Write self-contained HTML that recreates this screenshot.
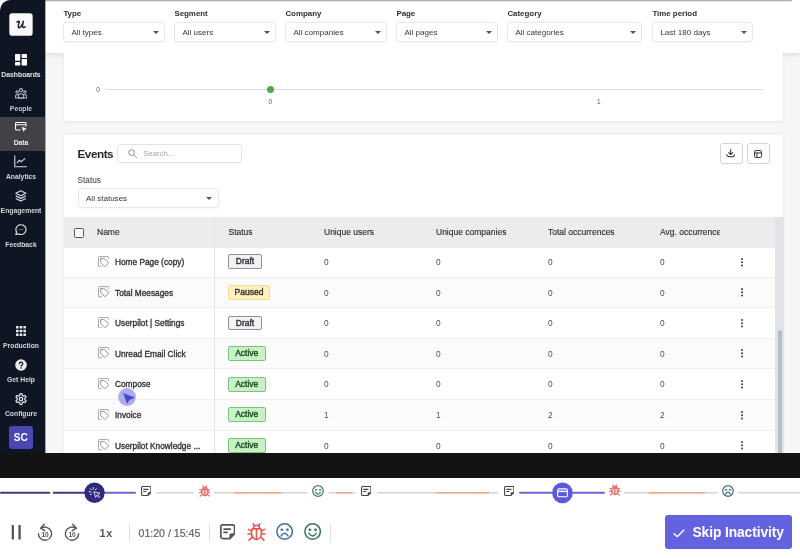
<!DOCTYPE html>
<html><head><meta charset="utf-8">
<style>
*{box-sizing:border-box;margin:0;padding:0}
html,body{width:800px;height:558px;overflow:hidden;background:#fff;font-family:"Liberation Sans",sans-serif;color:#2b2f36}
.abs{position:absolute}
#app{position:absolute;left:0;top:0;width:800px;height:453px;background:#f6f6f7;overflow:hidden}
#side{position:absolute;left:0;top:0;width:45px;height:453px;background:#0f1522;border-top-left-radius:10.500px;box-shadow:1px 0 0 rgba(15,21,34,.35)}
#logo{position:absolute;left:8px;top:12px;display:block}
.nav{position:absolute;left:0;width:45px;text-align:center;color:#e9eaee;font-size:7px;font-weight:bold;letter-spacing:-0.1px}
.nav svg{display:block;margin:0 auto}
#fbar{position:absolute;left:45px;top:0;width:755px;height:53px;border-top:1px solid #fff;background:#fff;box-shadow:0 2px 5px rgba(0,0,0,.10)}
.flabel{position:absolute;top:8.200px;font-size:7.900px;font-weight:bold;color:#2a2e35}
.sel{position:absolute;top:21px;height:20px;border:1px solid #e9e9ec;border-radius:3px;background:#fff;font-size:8.050px;color:#34373d;line-height:19.300px;padding-left:7.500px;box-shadow:0 1px 2px rgba(0,0,0,.04)}
.sel i{position:absolute;right:5.200px;top:8.300px;width:0;height:0;border-left:3px solid transparent;border-right:3px solid transparent;border-top:3.5px solid #555}
#chart{position:absolute;left:63.500px;top:53px;width:719.700px;height:68px;background:#fff;border-radius:0 0 3px 3px;box-shadow:0 1px 3px rgba(0,0,0,.08)}
#events{position:absolute;left:63.500px;top:134px;width:719.700px;height:330px;background:#fff;border-radius:3px 3px 0 0;box-shadow:inset 0 1px 0 #f8f8f9,0 0 3px rgba(0,0,0,.08)}
#black{position:absolute;left:0;top:453px;width:800px;height:25px;background:#131313}
#player{position:absolute;left:0;top:478px;width:800px;height:80px;background:#fff}

.navbg{position:absolute;left:0;width:45px;background:#404247}
.ni{position:absolute;display:block}
.nl{position:absolute;left:-11.500px;width:65px;text-align:center;color:#d3d6dc;font-size:6.800px;font-weight:bold;line-height:9px;white-space:nowrap}
#avatar{position:absolute;left:9px;top:426px;width:23.500px;height:23px;border-radius:3px;background:#4a47b5;color:#fff;font-size:10.200px;font-weight:bold;text-align:center;line-height:23.500px}

.ax{position:absolute;font-size:6.500px;color:#555;text-align:center;line-height:8px}

#etitle{position:absolute;left:14px;top:12.800px;font-size:11.700px;font-weight:bold;letter-spacing:-.45px;color:#25282e;line-height:14px}
#search{position:absolute;left:53.700px;top:9.700px;width:124.500px;height:19.500px;border:1px solid #e3e4e7;border-radius:3px;box-shadow:0 1px 2px rgba(0,0,0,.04)}
#search span{position:absolute;left:25px;top:0;font-size:7.800px;color:#a3a5aa;line-height:17.500px}
.btn{position:absolute;top:9.100px;width:23px;height:20.800px;border:1px solid #d3d3d5;border-radius:3px;background:#fff}
#stlabel{position:absolute;left:14px;top:40.800px;font-size:8.300px;color:#33373d;line-height:10px}
#thead{position:absolute;left:0;top:83px;width:711.500px;height:30.900px;z-index:2;background:#ececee}
#thead span{position:absolute;top:0;line-height:31.600px;font-size:8.500px;color:#26292e;-webkit-text-stroke:.12px #26292e;white-space:nowrap}
.cb{position:absolute;left:10.900px;top:11px;width:10px;height:10px;border:1.200px solid #55585e;border-radius:1.500px;background:#f6f6f7}
#rows{position:absolute;left:0;top:113px;width:711.500px}
.row{position:relative;height:30.620px;border-bottom:1px solid #efeff0;background:#fff}
.row.r1{background:#fbfbfb}
.row span{position:absolute;top:0;line-height:30.500px;font-size:8.300px;color:#4a4d53}
.ri{position:absolute;left:34.200px;top:8.600px}
.nm{position:absolute;left:51.500px;top:0;line-height:31px;font-size:8.300px;color:#2d3036;font-weight:normal;-webkit-text-stroke:.32px #2d3036;white-space:nowrap}
.bd{position:absolute;left:164.500px;top:7.300px;height:14.900px;line-height:12.900px;padding:0;text-align:center;font-style:normal;font-weight:normal;-webkit-text-stroke:.38px;font-size:8.500px;border-radius:2px;border:1px solid}
.bd.d{width:34px;background:#f3f3f4;border-color:#8d9096;color:#2d3036}
.bd.p{width:42px;background:#fdf0c3;border-color:#f6dd8e;color:#3a3420}
.bd.a{width:37.500px;background:#c8f1c6;border-color:#7cc47c;color:#1d4a22}
.row u{position:absolute;left:677.200px;top:10.500px;width:2px;height:2px;border-radius:50%;background:#3a3d43;box-shadow:0 3.200px 0 #3a3d43,0 6.400px 0 #3a3d43}
#coldiv{z-index:3;position:absolute;left:150.300px;top:83px;width:1px;height:250px;background:#e4e4e6}
#strack{position:absolute;left:711.500px;top:83px;width:8.500px;height:250px;background:#e2e3e7}
#sthumb{position:absolute;left:714px;top:195.500px;width:4px;height:140px;background:#b9bbc5;border-radius:2px}

.ti{position:absolute;display:block}
.sg{position:absolute;display:block;border-radius:1px}
.knob{position:absolute;border-radius:50%}
.pz{position:absolute;top:47px;width:3px;height:14.500px;background:#5a5a5a;border-radius:1px}
.dv{position:absolute;top:45.500px;width:1px;height:18px;background:#e1e1e1}
#spd{position:absolute;left:99.400px;top:46.800px;font-size:10.800px;font-weight:bold;color:#555;line-height:16px;letter-spacing:.9px}
#tm{position:absolute;left:138.500px;top:46.500px;font-size:10.600px;color:#666;-webkit-text-stroke:.2px #666;line-height:16px;white-space:nowrap}
#skip{position:absolute;left:665px;top:37px;width:127.300px;height:34px;background:#6562e2;border-radius:3px;color:#fff}
#skip span{position:absolute;left:27.500px;top:1.300px;line-height:34px;font-size:13.800px;font-weight:bold;white-space:nowrap;letter-spacing:-.1px}
</style></head><body>
<div id="wrap" style="position:absolute;left:0;top:0;width:800px;height:558px;will-change:transform">
<div id="app">
  <div id="fbar"><div style="position:absolute;left:0;top:-1px;width:747px;height:1px;background:#adadad;box-shadow:0 1px 1.500px rgba(0,0,0,.13)"></div><div class="flabel" style="left:18.4px">Type</div><div class="sel" style="left:17.9px;width:102px">All types<i></i></div><div class="flabel" style="left:129.4px">Segment</div><div class="sel" style="left:128.9px;width:102px">All users<i></i></div><div class="flabel" style="left:240.4px">Company</div><div class="sel" style="left:239.9px;width:102px">All companies<i></i></div><div class="flabel" style="left:351.4px">Page</div><div class="sel" style="left:350.9px;width:102px">All pages<i></i></div><div class="flabel" style="left:462.4px">Category</div><div class="sel" style="left:461.9px;width:135px">All categories<i></i></div><div class="flabel" style="left:607.4px">Time period</div><div class="sel" style="left:606.9px;width:101px">Last 180 days<i></i></div></div>
  <div id="chart">
<div class="ax" style="left:29.500px;top:33px;width:10px">0</div>
<div style="position:absolute;left:42.500px;top:36px;width:658px;height:1px;background:#dcdcdc"></div>
<div style="position:absolute;left:203.500px;top:32.700px;width:7.400px;height:7.400px;border-radius:50%;background:#4fa950"></div>
<div class="ax" style="left:201.800px;top:45px;width:10px">0</div>
<div class="ax" style="left:530.300px;top:45px;width:10px">1</div>
</div>
  <div id="events">
<div id="etitle">Events</div>
<div id="search"><svg width="9" height="9" viewBox="0 0 9 9" style="position:absolute;left:9.400px;top:4.100px" fill="none" stroke="#8a8d93" stroke-width="1"><circle cx="3.600" cy="3.600" r="2.900"/><path d="M5.800 5.800l2.800 2.800" stroke-linecap="round"/></svg><span>Search...</span></div>
<div class="btn" style="left:656px"><svg width="9.400" height="8.500" viewBox="0 0 10 9" style="position:absolute;left:5.800px;top:5.200px" fill="none" stroke="#333" stroke-width="1.100" stroke-linecap="round" stroke-linejoin="round"><path d="M5 .5v5.200M2.900 3.800L5 5.900l2.100-2.100"/><path d="M.8 6.200c.4 1.500 2 2.100 4.200 2.100s3.800-.6 4.200-2.100"/></svg></div>
<div class="btn" style="left:683.300px"><svg width="8" height="8" viewBox="0 0 9 9" style="position:absolute;left:6.300px;top:5.600px" fill="none" stroke="#333" stroke-width="1.100"><rect x=".6" y=".6" width="7.800" height="7.800" rx="1.400"/><path d="M.6 3.300h7.800M3.300 3.300v5.100"/></svg></div>
<div id="stlabel">Status</div>
<div class="sel" style="left:14px;top:53.600px;width:141px;height:20.600px;line-height:19.800px">All statuses<i></i></div>
<div id="thead"><div class="cb"></div>
<span style="left:33.500px">Name</span><span style="left:165px">Status</span><span style="left:260.500px">Unique users</span><span style="left:372.500px">Unique companies</span><span style="left:484.500px">Total occurrences</span><span style="left:596.500px;width:60px;overflow:hidden">Avg. occurrence</span>
</div>
<div id="rows">
<div class="row r0"><svg class="ri" width="11.200" height="11.400" viewBox="0 0 12 12" fill="none" stroke-width="1" stroke-linejoin="round" stroke-linecap="round" stroke="#9b9ea5"><path d="M11.500 3V1.300c0-.4-.3-.8-.8-.8H1.300c-.5 0-.8.400-.8.800v9.400c0 .4.300.8.800.8H4"/><path d="M3.400 2.700h2.800c.3 0 .5.100.7.300l4.200 3.600c.4.300.4.800.1 1.100l-3.300 3.200c-.3.300-.8.300-1.100 0L3.100 7c-.2-.2-.3-.4-.3-.7V3.300c0-.3.300-.6.600-.6z" stroke="#8a8d95"/></svg><b class="nm">Home Page (copy)</b><em class="bd d">Draft</em><span style="left:260.500px">0</span><span style="left:372.500px">0</span><span style="left:484.500px">0</span><span style="left:596.500px">0</span><u></u></div>
<div class="row r1"><svg class="ri" width="11.200" height="11.400" viewBox="0 0 12 12" fill="none" stroke-width="1" stroke-linejoin="round" stroke-linecap="round" stroke="#9b9ea5"><path d="M11.500 3V1.300c0-.4-.3-.8-.8-.8H1.300c-.5 0-.8.400-.8.800v9.400c0 .4.300.8.800.8H4"/><path d="M3.400 2.700h2.800c.3 0 .5.100.7.300l4.200 3.600c.4.300.4.800.1 1.100l-3.300 3.200c-.3.300-.8.300-1.100 0L3.100 7c-.2-.2-.3-.4-.3-.7V3.300c0-.3.300-.6.600-.6z" stroke="#8a8d95"/></svg><b class="nm">Total Meesages</b><em class="bd p">Paused</em><span style="left:260.500px">0</span><span style="left:372.500px">0</span><span style="left:484.500px">0</span><span style="left:596.500px">0</span><u></u></div>
<div class="row r0"><svg class="ri" width="11.200" height="11.400" viewBox="0 0 12 12" fill="none" stroke-width="1" stroke-linejoin="round" stroke-linecap="round" stroke="#9b9ea5"><path d="M11.500 3V1.300c0-.4-.3-.8-.8-.8H1.300c-.5 0-.8.400-.8.800v9.400c0 .4.300.8.800.8H4"/><path d="M3.400 2.700h2.800c.3 0 .5.100.7.300l4.200 3.600c.4.300.4.800.1 1.100l-3.300 3.200c-.3.300-.8.300-1.100 0L3.100 7c-.2-.2-.3-.4-.3-.7V3.300c0-.3.300-.6.600-.6z" stroke="#8a8d95"/></svg><b class="nm">Userpilot | Settings</b><em class="bd d">Draft</em><span style="left:260.500px">0</span><span style="left:372.500px">0</span><span style="left:484.500px">0</span><span style="left:596.500px">0</span><u></u></div>
<div class="row r1"><svg class="ri" width="11.200" height="11.400" viewBox="0 0 12 12" fill="none" stroke-width="1" stroke-linejoin="round" stroke-linecap="round" stroke="#9b9ea5"><path d="M11.500 3V1.300c0-.4-.3-.8-.8-.8H1.300c-.5 0-.8.400-.8.800v9.400c0 .4.300.8.800.8H4"/><path d="M3.400 2.700h2.800c.3 0 .5.100.7.300l4.200 3.600c.4.300.4.800.1 1.100l-3.300 3.200c-.3.300-.8.300-1.100 0L3.100 7c-.2-.2-.3-.4-.3-.7V3.300c0-.3.300-.6.600-.6z" stroke="#8a8d95"/></svg><b class="nm">Unread Email Click</b><em class="bd a">Active</em><span style="left:260.500px">0</span><span style="left:372.500px">0</span><span style="left:484.500px">0</span><span style="left:596.500px">0</span><u></u></div>
<div class="row r0"><svg class="ri" width="11.200" height="11.400" viewBox="0 0 12 12" fill="none" stroke-width="1" stroke-linejoin="round" stroke-linecap="round" stroke="#9b9ea5"><path d="M11.500 3V1.300c0-.4-.3-.8-.8-.8H1.300c-.5 0-.8.400-.8.800v9.400c0 .4.300.8.800.8H4"/><path d="M3.400 2.700h2.800c.3 0 .5.100.7.300l4.200 3.600c.4.300.4.800.1 1.100l-3.300 3.200c-.3.300-.8.300-1.100 0L3.100 7c-.2-.2-.3-.4-.3-.7V3.300c0-.3.300-.6.600-.6z" stroke="#8a8d95"/></svg><b class="nm">Compose</b><em class="bd a">Active</em><span style="left:260.500px">0</span><span style="left:372.500px">0</span><span style="left:484.500px">0</span><span style="left:596.500px">0</span><u></u></div>
<div class="row r1"><svg class="ri" width="11.200" height="11.400" viewBox="0 0 12 12" fill="none" stroke-width="1" stroke-linejoin="round" stroke-linecap="round" stroke="#9b9ea5"><path d="M11.500 3V1.300c0-.4-.3-.8-.8-.8H1.300c-.5 0-.8.400-.8.800v9.400c0 .4.300.8.800.8H4"/><path d="M3.400 2.700h2.800c.3 0 .5.100.7.300l4.200 3.600c.4.300.4.800.1 1.100l-3.300 3.200c-.3.300-.8.300-1.100 0L3.100 7c-.2-.2-.3-.4-.3-.7V3.300c0-.3.300-.6.600-.6z" stroke="#8a8d95"/></svg><b class="nm">Invoice</b><em class="bd a">Active</em><span style="left:260.500px">1</span><span style="left:372.500px">1</span><span style="left:484.500px">2</span><span style="left:596.500px">2</span><u></u></div>
<div class="row r0"><svg class="ri" width="11.200" height="11.400" viewBox="0 0 12 12" fill="none" stroke-width="1" stroke-linejoin="round" stroke-linecap="round" stroke="#9b9ea5"><path d="M11.500 3V1.300c0-.4-.3-.8-.8-.8H1.300c-.5 0-.8.400-.8.800v9.400c0 .4.300.8.800.8H4"/><path d="M3.400 2.700h2.800c.3 0 .5.100.7.300l4.200 3.600c.4.300.4.800.1 1.100l-3.300 3.200c-.3.300-.8.300-1.100 0L3.100 7c-.2-.2-.3-.4-.3-.7V3.300c0-.3.300-.6.600-.6z" stroke="#8a8d95"/></svg><b class="nm">Userpilot Knowledge ...</b><em class="bd a">Active</em><span style="left:260.500px">0</span><span style="left:372.500px">0</span><span style="left:484.500px">0</span><span style="left:596.500px">0</span><u></u></div>

</div>
<div id="coldiv"></div>
<div id="strack"></div><div id="sthumb"></div>
</div>
  <svg style="position:absolute;left:117px;top:387.200px" width="20" height="20" viewBox="0 0 20 20"><circle cx="10" cy="10" r="8.900" fill="#a6a6ef" fill-opacity=".93"/><path d="M6.600 6.400l10.700 4.400-5 1.900-2.200 3.600z" fill="#4845c5" stroke="#4845c5" stroke-width=".5" stroke-linejoin="round"/></svg>
  <div id="side"><svg id="logo" width="28" height="28" viewBox="0 0 28 28"><rect x="1.350" y="1.150" width="23.300" height="22.600" rx="2.800" fill="#f9f9f9"/><path d="M9 10.100c1-.9 2.100-1.200 2.300-.4.200.9-1.300 3.500-1 5.200.2 1.200 1.700 1 2.900-.6 1.200-1.600 1.800-3.500 2.100-5-.4 1.900-1.100 4.400-.6 5.700.4 1 1.500.7 2.400-.3" fill="none" stroke="#1b2030" stroke-width="1.500" stroke-linecap="round" stroke-linejoin="round"/></svg>
<div class="navbg" style="top:117px;height:33.500px"></div>
<!-- dashboards -->
<svg class="ni" style="left:15px;top:54px" width="12" height="11.500" viewBox="0 0 12 11.500"><rect x="0" y="0" width="5.200" height="6.800" rx=".6" fill="#fff"/><rect x="0" y="8" width="5.200" height="3.500" rx=".6" fill="#fff"/><rect x="6.600" y="0" width="5.400" height="3.900" rx=".6" fill="#fff"/><rect x="6.600" y="5.100" width="5.400" height="6.400" rx=".6" fill="#fff"/></svg>
<div class="nl" style="top:70px;color:#e4e6ea">Dashboards</div>
<!-- people -->
<svg class="ni" style="left:15px;top:88.200px" width="12" height="10.800" viewBox="0 0 13 11.500" fill="none" stroke="#b4b8c1" stroke-width="1.150"><circle cx="6.500" cy="2.300" r="1.700"/><circle cx="2.300" cy="4.300" r="1.300"/><circle cx="10.700" cy="4.300" r="1.300"/><path d="M3.600 10.800v-2.200c0-1.500 1.300-2.500 2.900-2.500s2.900 1 2.900 2.500v2.200z"/><path d="M3.500 7.200H1.900c-.8 0-1.300.6-1.300 1.300v2.300h12v-2.300c0-.7-.5-1.300-1.300-1.300H9.500"/></svg>
<div class="nl" style="top:104px;color:#c4c7cf">People</div>
<!-- data -->
<svg class="ni" style="left:15px;top:122.300px" width="12" height="10.200" viewBox="0 0 13 11" fill="none" stroke="#fff" stroke-width="1.100" stroke-linejoin="round"><path d="M6 8.600H1.300c-.4 0-.7-.3-.7-.7V1.300c0-.4.300-.7.700-.7h9.900c.4 0 .7.300.7.700V5"/><path d="M.6 3h11.300"/><path d="M7.600 5.600l4.600 1.800-2 .8-.8 2z" fill="#fff" stroke-width=".6"/></svg>
<div class="nl" style="top:137.500px;color:#eeeff1">Data</div>
<!-- analytics -->
<svg class="ni" style="left:14.400px;top:155.200px" width="12.800" height="12.500" viewBox="0 0 13 12.500" fill="none" stroke="#d6d9df" stroke-width="1.100" stroke-linecap="round" stroke-linejoin="round"><path d="M.8.600v11.200h11.800"/><path d="M3.200 7.600l2.300-2.400 2 1.500 3.500-3.200"/></svg>
<div class="nl" style="top:172px">Analytics</div>
<!-- engagement -->
<svg class="ni" style="left:15px;top:189.800px" width="11.600" height="11.800" viewBox="0 0 12 12.500" fill="none" stroke="#d6d9df" stroke-width="1.250" stroke-linejoin="round"><path d="M6 .7l5.300 2.700L6 6.100.7 3.400z"/><path d="M.7 6.200L6 8.900l5.300-2.700"/><path d="M.7 9L6 11.700 11.300 9"/></svg>
<div class="nl" style="top:206px">Engagement</div>
<!-- feedback -->
<svg class="ni" style="left:15px;top:223.600px" width="12" height="11.500" viewBox="0 0 13 12.500" fill="none" stroke="#d6d9df" stroke-width="1.300" stroke-linejoin="round"><path d="M6.600.7a5.400 5.400 0 1 1-2.900 10l-2.900.9.900-2.800A5.400 5.400 0 0 1 6.600.7z"/><path d="M5 6.100h.1M6.600 6.100h.1M8.200 6.100h.1" stroke-linecap="round" stroke-width=".8"/></svg>
<div class="nl" style="top:240px">Feedback</div>
<!-- production -->
<svg class="ni" style="left:16px;top:326px" width="10" height="10" viewBox="0 0 10 10" fill="#e9eaee"><rect x="0" y="0" width="2.600" height="2.600" rx=".5"/><rect x="3.700" y="0" width="2.600" height="2.600" rx=".5"/><rect x="7.400" y="0" width="2.600" height="2.600" rx=".5"/><rect x="0" y="3.700" width="2.600" height="2.600" rx=".5"/><rect x="3.700" y="3.700" width="2.600" height="2.600" rx=".5"/><rect x="7.400" y="3.700" width="2.600" height="2.600" rx=".5"/><rect x="0" y="7.400" width="2.600" height="2.600" rx=".5"/><rect x="3.700" y="7.400" width="2.600" height="2.600" rx=".5"/><rect x="7.400" y="7.400" width="2.600" height="2.600" rx=".5"/></svg>
<div class="nl" style="top:341px">Production</div>
<!-- help -->
<svg class="ni" style="left:15px;top:358.500px" width="12" height="12" viewBox="0 0 12 12"><circle cx="6" cy="6" r="5.800" fill="#eceef2"/><path d="M4.300 4.700c0-1 .8-1.600 1.700-1.600 1 0 1.800.6 1.800 1.500 0 1.300-1.700 1.300-1.700 2.600" fill="none" stroke="#0f1522" stroke-width="1.200" stroke-linecap="round"/><circle cx="6.100" cy="9" r=".8" fill="#0f1522"/></svg>
<div class="nl" style="top:375px">Get Help</div>
<!-- configure -->
<svg class="ni" style="left:15px;top:393px" width="12" height="12" viewBox="0 0 12 12" fill="none" stroke="#e2e4ea" stroke-width="1.250" stroke-linejoin="round"><path d="M6.00 0.70 L6.28 0.71 L6.55 0.73 L6.83 0.77 L7.06 1.03 L7.18 1.61 L7.24 2.18 L7.36 2.45 L7.55 2.53 L7.73 2.61 L7.90 2.71 L8.07 2.81 L8.23 2.93 L8.39 3.05 L8.69 3.01 L9.22 2.78 L9.77 2.60 L10.12 2.66 L10.29 2.88 L10.44 3.11 L10.59 3.35 L10.72 3.59 L10.84 3.84 L10.95 4.10 L10.83 4.43 L10.39 4.82 L9.93 5.16 L9.75 5.41 L9.78 5.60 L9.79 5.80 L9.80 6.00 L9.79 6.20 L9.78 6.40 L9.75 6.59 L9.93 6.84 L10.39 7.18 L10.83 7.57 L10.95 7.90 L10.84 8.16 L10.72 8.41 L10.59 8.65 L10.44 8.89 L10.29 9.12 L10.12 9.34 L9.77 9.40 L9.22 9.22 L8.69 8.99 L8.39 8.95 L8.23 9.07 L8.07 9.19 L7.90 9.29 L7.73 9.39 L7.55 9.47 L7.36 9.55 L7.24 9.82 L7.18 10.39 L7.06 10.97 L6.83 11.23 L6.55 11.27 L6.28 11.29 L6.00 11.30 L5.72 11.29 L5.45 11.27 L5.17 11.23 L4.94 10.97 L4.82 10.39 L4.76 9.82 L4.64 9.55 L4.45 9.47 L4.27 9.39 L4.10 9.29 L3.93 9.19 L3.77 9.07 L3.61 8.95 L3.31 8.99 L2.78 9.22 L2.23 9.40 L1.88 9.34 L1.71 9.12 L1.56 8.89 L1.41 8.65 L1.28 8.41 L1.16 8.16 L1.05 7.90 L1.17 7.57 L1.61 7.18 L2.07 6.84 L2.25 6.59 L2.22 6.40 L2.21 6.20 L2.20 6.00 L2.21 5.80 L2.22 5.60 L2.25 5.41 L2.07 5.16 L1.61 4.82 L1.17 4.43 L1.05 4.10 L1.16 3.84 L1.28 3.59 L1.41 3.35 L1.56 3.11 L1.71 2.88 L1.88 2.66 L2.23 2.60 L2.78 2.78 L3.31 3.01 L3.61 3.05 L3.77 2.93 L3.93 2.81 L4.10 2.71 L4.27 2.61 L4.45 2.53 L4.64 2.45 L4.76 2.18 L4.82 1.61 L4.94 1.03 L5.17 0.77 L5.45 0.73 L5.72 0.71Z"/><circle cx="6" cy="6" r="1.750"/></svg>
<div class="nl" style="top:409px">Configure</div>
<div id="avatar">SC</div>
</div>
</div>
<div id="black"></div>
<div id="player"><svg class="ti" style="left:0;top:0" width="800" height="30" viewBox="0 0 800 30"><rect x="0" y="13.70" width="50.3" height="2" rx="1.00" fill="#3b3985"/><rect x="52.8" y="13.70" width="33.2" height="2" rx="1.00" fill="#3b3985"/><rect x="102" y="13.70" width="34.0" height="2" rx="1.00" fill="#6a67d8"/><rect x="156" y="13.90" width="38.0" height="1.6" rx="0.80" fill="#d3d3d5"/><rect x="214" y="13.90" width="94.0" height="1.6" rx="0.80" fill="#d3d3d5"/><rect x="234" y="13.90" width="48.0" height="1.6" rx="0.80" fill="#f0a78a"/><rect x="328.5" y="13.90" width="27.0" height="1.6" rx="0.80" fill="#d3d3d5"/><rect x="336.5" y="13.90" width="15.5" height="1.6" rx="0.80" fill="#f0a78a"/><rect x="377" y="13.90" width="121.5" height="1.6" rx="0.80" fill="#d3d3d5"/><rect x="436" y="13.90" width="53.5" height="1.6" rx="0.80" fill="#f0a78a"/><rect x="519" y="13.70" width="34.0" height="2" rx="1.00" fill="#6a67d8"/><rect x="572" y="13.70" width="33.0" height="2" rx="1.00" fill="#6a67d8"/><rect x="624" y="13.90" width="93.5" height="1.6" rx="0.80" fill="#d3d3d5"/><rect x="648.5" y="13.90" width="56.5" height="1.6" rx="0.80" fill="#f0a78a"/><rect x="738.5" y="13.90" width="62.5" height="1.6" rx="0.80" fill="#d3d3d5"/></svg><svg class="ti" style="left:83px;top:3px" width="23" height="24" viewBox="0 0 23 24"><circle cx="11.500" cy="11.800" r="10.200" fill="#2e2b7e"/><g transform="translate(5.500 5.800)" fill="none" stroke="#fff" stroke-width=".9" stroke-linecap="round"><path d="M5.400 5.400l1.700 5.200 1-2.100 2.300 2.300.9-.9-2.300-2.300 2.100-1z" fill="#2e2b7e" stroke-linejoin="round" stroke-width=".8"/><path d="M4.800.7v1.700M1.700 1.900l1.200 1.200M.6 5h1.700M1.800 8l1.200-1.100M7.800 1.900L6.700 3.100"/></g></svg><svg class="ti" style="left:140.5px;top:7.700px" width="10.500" height="10" viewBox="0 0 11 10.500" fill="none" stroke="#444" stroke-width="1.150" stroke-linejoin="round"><path d="M1.700.6h7.600c.6 0 1.100.5 1.100 1.100v5.100L7.300 9.900H1.700c-.6 0-1.100-.5-1.100-1.100V1.700C.6 1.100 1.100.6 1.700.6z"/><path d="M10.400 6.800H8.200c-.5 0-.9.400-.9.900v2.200z" fill="#444" stroke-width=".5"/><path d="M2.800 3.500h4.600M2.800 5.800h2.400" stroke-linecap="round"/></svg><svg class="ti" style="left:198.6px;top:6.5px" width="11.6" height="12.08" viewBox="0 0 24 25" fill="none" stroke="#df6763" stroke-width="2.28" stroke-linecap="round" stroke-linejoin="round"><path d="M8 8.500c0-2.800 1.700-4.300 4-4.300s4 1.500 4 4.300z" fill="#fad0cf"/><path d="M6.500 8.500h11c.6 1.400.9 3.300.9 5.500 0 4.500-2.700 8-6.400 8s-6.400-3.500-6.400-8c0-2.200.3-4.100.9-5.500z" fill="#fad0cf"/><path d="M12 9.500v12"/><path d="M9.300 4.800L7.800 2.200M14.700 4.800l1.500-2.600"/><path d="M6 11.500L1.800 9.300M18 11.500l4.200-2.200M5.600 15.200H1.200M18.400 15.200h4.400M6.600 19.200L2.600 23M17.400 19.200l4 3.800"/></svg><svg class="ti" style="left:312.10px;top:7.00px" width="12" height="12" viewBox="0 0 12 12" fill="none" stroke="#4b7c6a" stroke-width="1.25" stroke-linecap="round"><circle cx="6" cy="6" r="5.28"/><path d="M3.48 7.20Q6.00 10.80 8.52 7.20"/><circle cx="4.02" cy="4.68" r="0.72" fill="#4b7c6a" stroke-width="0.62"/><circle cx="7.98" cy="4.68" r="0.72" fill="#4b7c6a" stroke-width="0.62"/></svg><svg class="ti" style="left:360.5px;top:7.700px" width="10.500" height="10" viewBox="0 0 11 10.500" fill="none" stroke="#444" stroke-width="1.150" stroke-linejoin="round"><path d="M1.700.6h7.600c.6 0 1.100.5 1.100 1.100v5.100L7.300 9.900H1.700c-.6 0-1.100-.5-1.100-1.100V1.700C.6 1.100 1.100.6 1.700.6z"/><path d="M10.400 6.800H8.200c-.5 0-.9.400-.9.900v2.200z" fill="#444" stroke-width=".5"/><path d="M2.800 3.500h4.600M2.800 5.800h2.400" stroke-linecap="round"/></svg><svg class="ti" style="left:503.5px;top:7.700px" width="10.500" height="10" viewBox="0 0 11 10.500" fill="none" stroke="#444" stroke-width="1.150" stroke-linejoin="round"><path d="M1.700.6h7.600c.6 0 1.100.5 1.100 1.100v5.100L7.300 9.900H1.700c-.6 0-1.100-.5-1.100-1.100V1.700C.6 1.100 1.100.6 1.700.6z"/><path d="M10.400 6.800H8.200c-.5 0-.9.400-.9.900v2.200z" fill="#444" stroke-width=".5"/><path d="M2.800 3.500h4.600M2.800 5.800h2.400" stroke-linecap="round"/></svg><svg class="ti" style="left:551px;top:3px" width="23" height="24" viewBox="0 0 23 24"><circle cx="11.450" cy="11.900" r="10.300" fill="#5c59dc"/><g transform="translate(6 7.300)" fill="none" stroke="#fff" stroke-width="1.100"><rect x=".6" y=".6" width="9.800" height="7.900" rx="1.400"/><path d="M.6 3.100h9.800" stroke-width="1.400"/></g></svg><svg class="ti" style="left:609.2px;top:6.4px" width="11.6" height="12.08" viewBox="0 0 24 25" fill="none" stroke="#df6763" stroke-width="2.28" stroke-linecap="round" stroke-linejoin="round"><path d="M8 8.500c0-2.800 1.700-4.300 4-4.300s4 1.500 4 4.300z" fill="#fad0cf"/><path d="M6.500 8.500h11c.6 1.400.9 3.300.9 5.500 0 4.500-2.700 8-6.400 8s-6.400-3.500-6.400-8c0-2.200.3-4.100.9-5.500z" fill="#fad0cf"/><path d="M12 9.500v12"/><path d="M9.300 4.800L7.800 2.200M14.700 4.800l1.500-2.600"/><path d="M6 11.500L1.800 9.300M18 11.500l4.200-2.200M5.600 15.200H1.200M18.400 15.200h4.400M6.600 19.200L2.600 23M17.400 19.200l4 3.800"/></svg><svg class="ti" style="left:721.60px;top:7.00px" width="12" height="12" viewBox="0 0 12 12" fill="none" stroke="#46707f" stroke-width="1.25" stroke-linecap="round"><circle cx="6" cy="6" r="5.28"/><path d="M3.60 9.00Q6.00 5.28 8.40 9.00"/><circle cx="4.02" cy="4.68" r="0.72" fill="#46707f" stroke-width="0.62"/><circle cx="7.98" cy="4.68" r="0.72" fill="#46707f" stroke-width="0.62"/></svg><svg class="ti" style="left:10px;top:46px" width="14" height="17" viewBox="0 0 14 17"><rect x="1.700" y="1" width="2.300" height="14.600" rx=".6" fill="#595959"/><rect x="8.400" y="1" width="2.400" height="14.600" rx=".6" fill="#595959"/></svg><svg class="ti" style="left:36px;top:44.500px" width="18" height="19" viewBox="0 0 18 19" fill="none" stroke="#555" stroke-width="1.400" stroke-linecap="round" stroke-linejoin="round"><g><path d="M5.200 5.300A6.600 6.600 0 1 1 2.400 10.700"/><path d="M8.300 1.300L4.600 5.200l4.200 2.500"/></g><text x="9.100" y="13.900" font-family="Liberation Sans" font-size="6.600" font-weight="bold" fill="#555" stroke="none" text-anchor="middle">10</text></svg><svg class="ti" style="left:63.2px;top:44.500px" width="18" height="19" viewBox="0 0 18 19" fill="none" stroke="#555" stroke-width="1.400" stroke-linecap="round" stroke-linejoin="round"><g transform="translate(18 0) scale(-1 1)"><path d="M5.200 5.300A6.600 6.600 0 1 1 2.400 10.700"/><path d="M8.300 1.300L4.600 5.200l4.200 2.500"/></g><text x="9.100" y="13.900" font-family="Liberation Sans" font-size="6.600" font-weight="bold" fill="#555" stroke="none" text-anchor="middle">10</text></svg><div id="spd">1x</div><i class="dv" style="left:129px"></i><div id="tm">01:20 / 15:45</div><i class="dv" style="left:209px"></i><svg class="ti" style="left:220px;top:46.400px" width="15.400" height="15.400" viewBox="0 0 16.500 16.500" fill="none" stroke="#555" stroke-width="1.800" stroke-linejoin="round"><path d="M2.800.9h10.900c1 0 1.900.9 1.900 1.900v7.700l-5.100 5.100H2.800c-1 0-1.900-.9-1.900-1.900V2.800C.9 1.800 1.800.9 2.800.9z"/><path d="M15.600 10.500h-3.700c-.8 0-1.400.6-1.400 1.400v3.700z" fill="#555" stroke-width=".8"/><path d="M4.300 5.400h6.800M4.300 8.900h3.200" stroke-linecap="round" stroke-width="1.900"/></svg><svg class="ti" style="left:246.5px;top:44px" width="19" height="19.79" viewBox="0 0 24 25" fill="none" stroke="#e05a52" stroke-width="2.02" stroke-linecap="round" stroke-linejoin="round"><path d="M8 8.500c0-2.800 1.700-4.300 4-4.300s4 1.500 4 4.300z" fill="none"/><path d="M6.500 8.500h11c.6 1.400.9 3.300.9 5.500 0 4.500-2.700 8-6.400 8s-6.400-3.500-6.400-8c0-2.200.3-4.100.9-5.500z" fill="none"/><path d="M12 9.500v12"/><path d="M9.300 4.800L7.800 2.200M14.700 4.800l1.500-2.600"/><path d="M6 11.500L1.800 9.300M18 11.500l4.200-2.200M5.600 15.200H1.200M18.400 15.200h4.400M6.600 19.200L2.600 23M17.400 19.200l4 3.800"/></svg><svg class="ti" style="left:275.70px;top:45.40px" width="17.2" height="17.2" viewBox="0 0 17.2 17.2" fill="none" stroke="#4573a8" stroke-width="1.5" stroke-linecap="round"><circle cx="8.6" cy="8.6" r="7.75"/><path d="M5.16 12.90Q8.60 7.57 12.04 12.90"/><circle cx="5.76" cy="6.71" r="1.03" fill="#4573a8" stroke-width="0.75"/><circle cx="11.44" cy="6.71" r="1.03" fill="#4573a8" stroke-width="0.75"/></svg><svg class="ti" style="left:303.70px;top:45.40px" width="17.2" height="17.2" viewBox="0 0 17.2 17.2" fill="none" stroke="#37795a" stroke-width="1.5" stroke-linecap="round"><circle cx="8.6" cy="8.6" r="7.75"/><path d="M4.99 10.32Q8.60 15.48 12.21 10.32"/><circle cx="5.76" cy="6.71" r="1.03" fill="#37795a" stroke-width="0.75"/><circle cx="11.44" cy="6.71" r="1.03" fill="#37795a" stroke-width="0.75"/></svg><i class="dv" style="left:330px"></i><div id="skip"><svg width="12" height="8.800" viewBox="0 0 13 10" style="position:absolute;left:8px;top:13.500px" fill="none" stroke="#fff" stroke-width="1.600" stroke-linecap="round" stroke-linejoin="round"><path d="M1 5.300l3.500 3.500L12 1.200"/></svg><span>Skip Inactivity</span></div></div>
</div>
</body></html>
